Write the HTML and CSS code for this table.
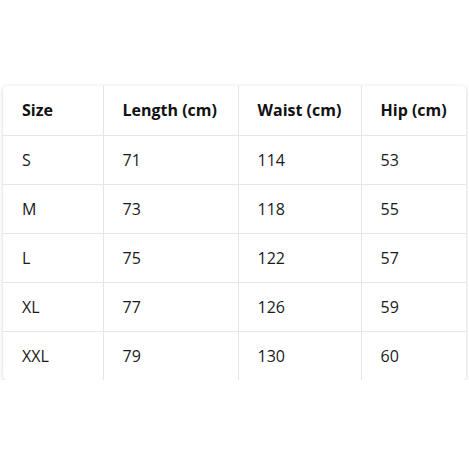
FILE: index.html
```html
<!DOCTYPE html>
<html>
<head>
<meta charset="utf-8">
<link rel="stylesheet" href="styles.css">
</head>
<body>
<div class="page">
  <div class="card">
    <table class="sizes">
      <thead>
        <tr><th class="c1">Size</th><th class="c2">Length (cm)</th><th class="c3">Waist (cm)</th><th class="c4">Hip (cm)</th></tr>
      </thead>
      <tbody>
        <tr><td>S</td><td>71</td><td>114</td><td>53</td></tr>
        <tr><td>M</td><td>73</td><td>118</td><td>55</td></tr>
        <tr><td>L</td><td>75</td><td>122</td><td>57</td></tr>
        <tr><td>XL</td><td>77</td><td>126</td><td>59</td></tr>
        <tr><td>XXL</td><td>79</td><td>130</td><td>60</td></tr>
      </tbody>
    </table>
  </div>
</div>
</body>
</html>
```

FILE: styles.css
```css
html, body {
  margin: 0;
  padding: 0;
  background: #ffffff;
}
.page {
  padding: 86px 3px 0 3px;
}
.card {
  width: 463px;
  background: #fff;
  border-radius: 4px;
  box-shadow: 0 1px 4px rgba(0,0,0,0.18);
  overflow: hidden;
}
.sizes {
  width: 100%;
  border-collapse: collapse;
  font-family: "Open Sans", "Noto Sans", sans-serif;
  font-size: 16px;
  color: #1a1a1a;
  table-layout: fixed;
}
.sizes th, .sizes td {
  height: 49px;
  padding: 0 0 0 19px;
  text-align: left;
  border: 1px solid #e6e6e6;
  box-sizing: border-box;
}
.sizes th {
  font-weight: 700;
  color: #111;
}
.sizes tr:first-child th { border-top: none; }
.sizes tr:last-child td { border-bottom: none; }
.sizes th:first-child, .sizes td:first-child { border-left: none; }
.sizes th:last-child, .sizes td:last-child { border-right: none; }
.c1 { width: 100px; }
.c2 { width: 135px; }
.c3 { width: 123px; }
.c4 { width: 105px; }
```
